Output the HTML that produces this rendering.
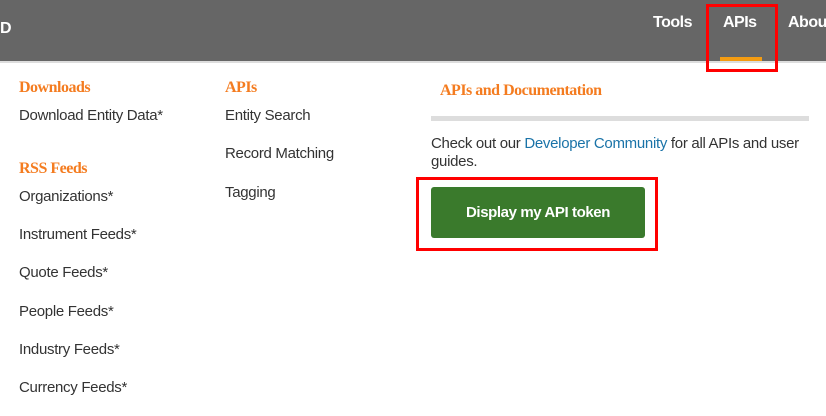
<!DOCTYPE html>
<html><head><style>
body{margin:0;width:826px;height:416px;overflow:hidden;background:#fff;font-family:"Liberation Sans",sans-serif;position:relative}
.hdr{position:absolute;left:0;top:0;width:826px;height:61px;background:#666}
.ln{position:absolute;left:0;top:61px;width:826px;height:2px;background:#ddd}
.t{position:absolute;white-space:nowrap}
.nav{color:#fff;font-size:16px;font-weight:bold;top:14px;letter-spacing:-0.5px}
.h{font-family:"Liberation Serif",serif;font-weight:bold;color:#f47c20;font-size:16px;letter-spacing:-0.5px}
.i{color:#333;font-size:15px;letter-spacing:-0.3px}
</style></head><body>
<div class="hdr"></div><div class="ln"></div>
<div class="t nav" style="left:0;top:20px">D</div>
<div class="t nav" style="left:653px">Tools</div>
<div class="t nav" style="left:723px">APIs</div>
<div class="t nav" style="left:788px">About</div>
<div style="position:absolute;left:720px;top:57px;width:42px;height:4px;background:#f39c12"></div>
<div style="position:absolute;left:706px;top:4px;width:66px;height:62px;border:3px solid #f00"></div>

<div class="t h" style="left:19px;top:79px">Downloads</div>
<div class="t i" style="left:19px;top:107px">Download Entity Data*</div>
<div class="t h" style="left:19px;top:160px">RSS Feeds</div>
<div class="t i" style="left:19px;top:188px">Organizations*</div>
<div class="t i" style="left:19px;top:226px">Instrument Feeds*</div>
<div class="t i" style="left:19px;top:264px">Quote Feeds*</div>
<div class="t i" style="left:19px;top:303px">People Feeds*</div>
<div class="t i" style="left:19px;top:341px">Industry Feeds*</div>
<div class="t i" style="left:19px;top:379px">Currency Feeds*</div>

<div class="t h" style="left:225px;top:79px">APIs</div>
<div class="t i" style="left:225px;top:107px">Entity Search</div>
<div class="t i" style="left:225px;top:145px">Record Matching</div>
<div class="t i" style="left:225px;top:184px">Tagging</div>

<div class="t h" style="left:440px;top:82px">APIs and Documentation</div>
<div style="position:absolute;left:431px;top:116px;width:378px;height:5px;background:#ddd"></div>
<div class="t i" style="left:431px;top:135px;line-height:18px;white-space:normal;width:390px">Check out our <span style="color:#1a73a8">Developer Community</span> for all APIs and user guides.</div>
<div style="position:absolute;left:416px;top:177px;width:236px;height:68px;border:3px solid #f00"></div>
<div style="position:absolute;left:431px;top:187px;width:214px;height:51px;background:#3a7a2c;border-radius:3px;color:#fff;font-weight:bold;font-size:15px;text-align:center;line-height:52px;letter-spacing:-0.4px">Display my API token</div>
</body></html>
